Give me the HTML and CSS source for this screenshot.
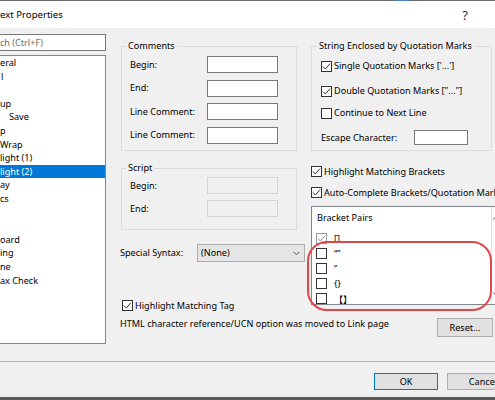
FILE: index.html
```html
<!DOCTYPE html>
<html>
<head>
<meta charset="utf-8">
<link rel="stylesheet" href="styles.css">
</head>
<body>
<div class="topline"><span class="topline-blue"></span></div>
<div class="titlebar"><span class="title">ext Properties</span><span class="help">?</span></div>
<div class="dlg">
  <div class="left">
    <div class="search">ch (Ctrl+F)</div>
    <ul class="tree">
      <li>eral</li>
      <li class="in2">l</li>
      <li></li>
      <li>up</li>
      <li class="in10">Save</li>
      <li>p</li>
      <li>Wrap</li>
      <li>light (1)</li>
      <li class="sel">light (2)</li>
      <li>ay</li>
      <li>cs</li>
      <li></li>
      <li></li>
      <li>oard</li>
      <li>ing</li>
      <li>ne</li>
      <li>ax Check</li>
    </ul>
  </div>
  <div class="main">
    <div class="cols">
      <div class="col1">
        <fieldset class="grp comments">
          <legend>Comments</legend>
          <div class="frow"><span class="lbl">Begin:</span><span class="edit"></span></div>
          <div class="frow"><span class="lbl">End:</span><span class="edit"></span></div>
          <div class="frow"><span class="lbl">Line Comment:</span><span class="edit"></span></div>
          <div class="frow"><span class="lbl">Line Comment:</span><span class="edit"></span></div>
        </fieldset>
        <fieldset class="grp script">
          <legend>Script</legend>
          <div class="frow"><span class="lbl">Begin:</span><span class="edit dis"></span></div>
          <div class="frow"><span class="lbl">End:</span><span class="edit dis"></span></div>
        </fieldset>
        <div class="special">
          <span class="lbl">Special Syntax:</span>
          <span class="select"><span>(None)</span><svg width="7" height="5" viewBox="0 0 7 5"><path d="M0.5 0.8 L3.5 3.8 L6.5 0.8" fill="none" stroke="#555" stroke-width="1"/></svg></span>
        </div>
        <div class="chk tag">
          <span class="cb"><svg width="9" height="9" viewBox="0 0 9 9"><path d="M1 4.6 L3.4 7 L8 1.6" fill="none" stroke="#333" stroke-width="1"/></svg></span>
          <span class="cbt">Highlight Matching Tag</span>
        </div>
      </div>
      <div class="col2">
        <fieldset class="grp quotes">
          <legend>String Enclosed by Quotation Marks</legend>
          <div class="srow r1">
            <span class="cb"><svg width="9" height="9" viewBox="0 0 9 9"><path d="M1 4.6 L3.4 7 L8 1.6" fill="none" stroke="#333" stroke-width="1"/></svg></span>
            <span class="cbt">Single Quotation Marks ['...']</span>
          </div>
          <div class="srow r2">
            <span class="cb"><svg width="9" height="9" viewBox="0 0 9 9"><path d="M1 4.6 L3.4 7 L8 1.6" fill="none" stroke="#333" stroke-width="1"/></svg></span>
            <span class="cbt">Double Quotation Marks ["..."]</span>
          </div>
          <div class="srow r3">
            <span class="cb"></span>
            <span class="cbt">Continue to Next Line</span>
          </div>
          <div class="srow esc">
            <span class="esc-lbl">Escape Character:</span>
            <span class="edit esc-edit"></span>
          </div>
        </fieldset>
        <div class="chk mb1">
          <span class="cb"><svg width="9" height="9" viewBox="0 0 9 9"><path d="M1 4.6 L3.4 7 L8 1.6" fill="none" stroke="#333" stroke-width="1"/></svg></span>
          <span class="cbt">Highlight Matching Brackets</span>
        </div>
        <div class="chk mb2">
          <span class="cb"><svg width="9" height="9" viewBox="0 0 9 9"><path d="M1 4.6 L3.4 7 L8 1.6" fill="none" stroke="#333" stroke-width="1"/></svg></span>
          <span class="cbt nowrap">Auto-Complete Brackets/Quotation Marks</span>
        </div>
        <div class="bp">
          <div class="bp-main">
            <div class="bp-head">Bracket Pairs</div>
            <div class="bp-item"><span class="cb gray"><svg width="9" height="9" viewBox="0 0 9 9"><path d="M1 4.6 L3.4 7 L8 1.6" fill="none" stroke="#8a8a8a" stroke-width="1"/></svg></span><span class="bpt">[]</span></div>
            <div class="bp-item"><span class="cb"></span><span class="bpt">“”</span></div>
            <div class="bp-item"><span class="cb"></span><span class="bpt">‘’</span></div>
            <div class="bp-item"><span class="cb"></span><span class="bpt">{}</span></div>
            <div class="bp-item"><span class="cb"></span><span class="bpt cjk">【】</span></div>
          </div>
          <div class="bp-scroll">
            <svg width="5" height="4" viewBox="0 0 5 4"><path d="M0.5 3.5 L2.5 1 L4.5 3.5" fill="none" stroke="#606060" stroke-width="1"/></svg>
            <svg width="5" height="4" viewBox="0 0 5 4"><path d="M0.5 0.5 L2.5 3 L4.5 0.5" fill="none" stroke="#606060" stroke-width="1"/></svg>
          </div>
        </div>
      </div>
    </div>
    <div class="note-row">
      <span class="note">HTML character reference/UCN option was moved to Link page</span>
      <span class="btn reset">Reset...</span>
    </div>
  </div>
</div>
<div class="sep"></div>
<div class="footer">
  <span class="btn ok">OK</span>
  <span class="btn cancel">Cancel</span>
</div>
<div class="bottomline"></div>
<div class="annot"></div>
</body>
</html>
```
FILE: styles.css
```css
* { box-sizing: border-box; }
html, body { margin: 0; padding: 0; }
body {
  width: 495px;
  height: 400px;
  overflow: hidden;
  position: relative;
  background: #f0f0f0;
  font-family: "Noto Sans", "Noto Sans CJK JP", sans-serif;
  font-size: 9.1px;
  line-height: 12px;
  color: #000;
}
.topline { height: 1px; background: #6a6a6a; display: flex; }
.topline-blue { margin-left: 395px; width: 15px; background: #4a7fc0; }
.titlebar {
  height: 27px;
  background: #fff;
  display: flex;
  align-items: center;
  justify-content: space-between;
  padding-right: 27px;
}
.title { font-size: 9.6px; }
.help { font-size: 13px; color: #333; }

.dlg { height: 333px; display: flex; }
.left { width: 106px; flex: none; padding-top: 6px; }
.search {
  height: 17px;
  margin-left: -2px;
  border: 1px solid #7a7a7a;
  background: #fff;
  color: #6d6d6d;
  line-height: 15px;
  padding-left: 1px;
  white-space: nowrap;
}
.tree {
  list-style: none;
  margin: 4px 0 0 -2px;
  padding: 0;
  height: 289px;
  border: 1px solid #828790;
  background: #fff;
  overflow: hidden;
}
.tree li {
  height: 13.6px;
  line-height: 13.6px;
  padding-left: 1px;
  white-space: nowrap;
}
.tree li.in2 { padding-left: 2px; }
.tree li.in10 { padding-left: 10px; }
.tree li.sel { background: #0078d7; color: #fff; }

.main {
  flex: 1;
  margin-left: 14px;
  padding-top: 12px;
  display: flex;
  flex-direction: column;
  min-width: 0;
}
.cols { display: flex; height: 271px; }
.col1 { width: 185px; flex: none; display: flex; flex-direction: column; }
.col2 { width: 184px; flex: none; margin-left: 6px; display: flex; flex-direction: column; }

.grp {
  margin: 0;
  min-width: 0;
  border: 1px solid #dcdcdc;
  padding: 4px 8px 6.5px 8px;
}
.grp legend { padding: 0 2px; margin-left: -4px; line-height: 12px; }
.comments { margin-left: 1px; width: 176px; }
.script { margin-left: 1px; width: 176px; margin-top: 11px; padding: 3px 8px 12px 8px; }

.frow { display: flex; align-items: center; height: 17px; }
.comments .frow + .frow { margin-top: 6.5px; }
.script .frow + .frow { margin-top: 6px; }
.lbl { width: 77px; flex: none; white-space: nowrap; }
.edit { display: block; width: 71px; height: 17px; border: 1px solid #7a7a7a; background: #fff; flex: none; }
.edit.dis { background: #f0f0f0; border-color: #d4d4d4; }

.special { display: flex; align-items: center; height: 18px; margin-top: 14px; }
.select {
  width: 108px;
  height: 18px;
  border: 1px solid #adadad;
  background: #e5e5e5;
  display: flex;
  align-items: center;
  justify-content: space-between;
  padding: 0 4px 0 3px;
}
.select svg { display: block; }

.chk { display: flex; align-items: center; height: 11px; }
.tag { margin-top: 38px; margin-left: 2px; }
.cb {
  display: block;
  width: 11px;
  height: 11px;
  border: 1px solid #333;
  background: #fff;
  flex: none;
}
.cb svg { display: block; }
.cb.gray { border-color: #999; }
.cbt { margin-left: 2px; white-space: nowrap; }

.quotes { width: 181px; padding: 8px 8px 5px 9px; }
.srow { display: flex; align-items: center; height: 12px; }
.srow.r2 { margin-top: 13px; }
.srow.r3 { margin-top: 10px; }
.srow.esc { margin-top: 11px; height: 15px; }
.esc-lbl { width: 93px; flex: none; white-space: nowrap; }
.esc-edit { width: 54px; height: 15px; }

.mb1 { margin-top: 15px; }
.mb2 { margin-top: 10px; }

.bp {
  margin-top: 8px;
  height: 99px;
  width: 200px;
  flex: none;
  border: 1px solid #828790;
  border-right: none;
  background: #fff;
  display: flex;
  overflow: hidden;
}
.bp-main { width: 179px; flex: none; }
.bp-head { height: 24px; line-height: 22px; padding-left: 5px; }
.bp-item { height: 15px; display: flex; align-items: center; padding-left: 4px; }
.bpt { margin-left: 7px; white-space: nowrap; line-height: 12px; }
.bpt.cjk { font-family: "Noto Sans CJK JP", sans-serif; }
.bp-scroll {
  width: 17px;
  flex: none;
  border-left: 1px solid #e2e2e2;
  background: #fbfbfb;
  display: flex;
  flex-direction: column;
  justify-content: space-between;
  padding: 9px 0 8px 1px;
}
.bp-scroll svg { display: block; }

.note-row {
  display: flex;
  justify-content: space-between;
  align-items: flex-start;
  margin-top: 7px;
  padding-right: 2px;
}
.note { white-space: nowrap; }
.btn {
  display: flex;
  align-items: center;
  justify-content: center;
  height: 19px;
  border: 1px solid #adadad;
  background: #e1e1e1;
  flex: none;
}
.reset { width: 56px; }

.sep { height: 1px; background: #b0b0b0; }
.footer { height: 35px; display: flex; gap: 9px; padding: 11px 0 0 374px; }
.footer .btn { height: 17px; }
.ok { width: 64px; border-color: #0078d7; }
.cancel { width: 72px; }
.bottomline { height: 3px; background: #5a5a5a; }

.annot {
  position: absolute;
  left: 307px;
  top: 241px;
  width: 185px;
  height: 70px;
  border: 2.5px solid #e0474d;
  border-radius: 20px;
}
```
